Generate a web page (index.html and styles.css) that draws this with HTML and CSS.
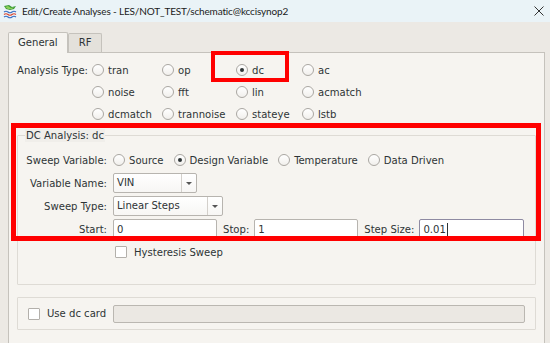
FILE: index.html
```html
<!DOCTYPE html>
<html lang="en">
<head>
  <meta charset="UTF-8" />
  <title>Edit/Create Analyses</title>
  <link rel="stylesheet" href="styles.css">
</head>
<body>
  <div class="window">
    <div class="titlebar">
      <svg class="app-icon" width="15" height="15" viewBox="0 0 15 15">
        <path d="M1 2 L6 1 L9 3 L13 2 L11 5 L7 6 L3 5 Z" fill="#3d9b3a"/>
        <path d="M2 3 L5 2 L8 4 L11 3 L9 5 L5 5 Z" fill="#8cd05a"/>
        <path d="M1 8 Q3 6.5 5 8 T9 8 T13 8" stroke="#3a6fc4" stroke-width="1.2" fill="none"/>
        <path d="M1 10.5 Q3 9 5 10.5 T9 10.5 T13 10.5" stroke="#d9452f" stroke-width="1.2" fill="none"/>
        <path d="M1 13 Q3 11.5 5 13 T9 13 T13 13" stroke="#3a6fc4" stroke-width="1.2" fill="none"/>
      </svg>
      <span class="title">Edit/Create Analyses - LES/NOT_TEST/schematic@kccisynop2</span>
      <svg class="close" width="10" height="10" viewBox="0 0 10 10">
        <path d="M0.5 0.5 L9.5 9.5 M9.5 0.5 L0.5 9.5" stroke="#333" stroke-width="1"/>
      </svg>
    </div>

    <div class="client">
      <div class="tabs">
        <div class="tab active">General</div>
        <div class="tab">RF</div>
      </div>

      <div class="panel">
        <div class="atype">
          <span class="lbl">Analysis Type:</span>
          <label class="radio"><i class="circle"></i>tran</label>
          <label class="radio"><i class="circle"></i>op</label>
          <label class="radio"><i class="circle on"></i>dc</label>
          <label class="radio"><i class="circle"></i>ac</label>

          <span></span>
          <label class="radio"><i class="circle"></i>noise</label>
          <label class="radio"><i class="circle"></i>fft</label>
          <label class="radio"><i class="circle"></i>lin</label>
          <label class="radio"><i class="circle"></i>acmatch</label>

          <span></span>
          <label class="radio"><i class="circle"></i>dcmatch</label>
          <label class="radio"><i class="circle"></i>trannoise</label>
          <label class="radio"><i class="circle"></i>stateye</label>
          <label class="radio"><i class="circle"></i>lstb</label>
        </div>

        <fieldset class="group">
          <legend>DC Analysis: dc</legend>
          <div class="form">
            <span class="lbl">Sweep Variable:</span>
            <div class="line radios">
              <label class="radio"><i class="circle"></i>Source</label>
              <label class="radio"><i class="circle on"></i>Design Variable</label>
              <label class="radio"><i class="circle"></i>Temperature</label>
              <label class="radio"><i class="circle"></i>Data Driven</label>
            </div>

            <span class="lbl">Variable Name:</span>
            <div class="line">
              <div class="combo combo-var"><span class="val">VIN</span><span class="drop"></span></div>
            </div>

            <span class="lbl">Sweep Type:</span>
            <div class="line">
              <div class="combo combo-type"><span class="val">Linear Steps</span><span class="drop"></span></div>
            </div>

            <span class="lbl">Start:</span>
            <div class="line fields">
              <div class="entry">0</div>
              <span class="flbl">Stop:</span>
              <div class="entry">1</div>
              <span class="flbl">Step Size:</span>
              <div class="entry focus">0.01<i class="caret"></i></div>
            </div>

            <span></span>
            <div class="line">
              <label class="check"><i class="box"></i>Hysteresis Sweep</label>
            </div>
          </div>
        </fieldset>

        <div class="group card">
          <label class="check"><i class="box"></i>Use dc card</label>
          <div class="entry disabled"></div>
        </div>
      </div>
    </div>

    <div class="mark mark-dc"></div>
    <div class="mark mark-group"></div>
  </div>
</body>
</html>
```

FILE: styles.css
```css
body {
  margin: 0;
  background: #ece9e4;
  font-family: "DejaVu Sans Condensed", "DejaVu Sans", sans-serif;
  font-size: 11.2px;
  color: #2e3436;
}

.window {
  position: relative;
  width: 550px;
  height: 343px;
  overflow: hidden;
}

.titlebar {
  height: 22px;
  background: #eaf3f7;
  display: flex;
  align-items: center;
  padding: 0 0 0 3px;
}

.app-icon {
  margin-right: 4px;
}

.title {
  font-family: Lato, sans-serif;
  font-size: 10px;
  letter-spacing: -0.15px;
  color: #1b1b1b;
}

.close {
  margin-left: auto;
  margin-right: 6px;
}

.client {
  padding-top: 10px;
}

.tabs {
  display: flex;
  align-items: flex-end;
  padding-left: 8px;
  height: 20px;
}

.tab {
  height: 18px;
  line-height: 18px;
  padding: 0 10px;
  border: 1px solid #c5c2bc;
  border-bottom: none;
  border-radius: 2px 2px 0 0;
  background: #e4e1db;
  color: #2e3436;
}

.tab.active {
  height: 20px;
  line-height: 20px;
  padding: 0 9px;
  background: #f6f4f0;
  margin-bottom: -1px;
  position: relative;
  z-index: 1;
}

.panel {
  margin: 0 5px 0 8px;
  border: 1px solid #c5c2bc;
  background: #f6f4f0;
  height: 300px;
}

.lbl {
  white-space: nowrap;
}

.atype {
  display: grid;
  grid-template-columns: 75px 70px 74px 66px 1fr;
  grid-auto-rows: 22px;
  align-items: center;
  padding: 6px 0 0 8px;
}

.radio {
  display: flex;
  align-items: center;
  gap: 4px;
  white-space: nowrap;
}

.circle {
  width: 10px;
  height: 10px;
  border: 1px solid #aaa7a2;
  border-radius: 50%;
  background: linear-gradient(#ffffff, #f1efec);
  display: flex;
  align-items: center;
  justify-content: center;
  flex: none;
}

.circle.on::after {
  content: "";
  width: 4px;
  height: 4px;
  border-radius: 50%;
  background: #2e3436;
}

.group {
  margin: 0 8px;
  border: 1px solid #dedbd5;
  border-radius: 1px;
}

fieldset.group {
  margin-top: 4px;
  padding: 0 0 21px;
  min-width: 0;
}

legend {
  margin-left: 7px;
  padding: 0 1px;
  background: #f0eeea;
  line-height: 13px;
}

.form {
  display: grid;
  grid-template-columns: 89px 1fr;
  grid-auto-rows: 22px;
  row-gap: 1px;
  column-gap: 6px;
  align-items: center;
  padding-top: 7px;
}

.form > .lbl {
  text-align: right;
}

.line {
  display: flex;
  align-items: center;
}

.radios {
  gap: 10px;
}

.combo {
  height: 18px;
  border: 1px solid #b7b4af;
  border-radius: 2px;
  background: linear-gradient(#ffffff, #f7f6f4);
  display: flex;
  align-items: stretch;
}

.combo .val {
  flex: 1;
  line-height: 18px;
  padding-left: 3px;
}

.combo .drop {
  width: 14px;
  border-left: 1px solid #d3d0cb;
  display: flex;
  align-items: center;
  justify-content: center;
}

.combo .drop::after {
  content: "";
  border-left: 3px solid transparent;
  border-right: 3px solid transparent;
  border-top: 3px solid #555;
}

.combo-var {
  width: 82px;
}

.combo-type {
  width: 108px;
}

.fields .entry {
  width: 104px;
}

.fields .entry.focus {
  width: 105px;
}

.flbl {
  margin: 0 5px 0 6px;
}

.entry {
  border: 1px solid #b7b4af;
  border-radius: 2px;
  background: #ffffff;
  padding-left: 3px;
  box-sizing: border-box;
  height: 20px;
  display: flex;
  align-items: center;
}

.entry.focus {
  border-color: #8e8aa2;
}

.caret {
  width: 1px;
  height: 13px;
  background: #2e3436;
  margin-left: 1px;
}

.check {
  display: flex;
  align-items: center;
  gap: 7px;
  white-space: nowrap;
}

.box {
  width: 10px;
  height: 10px;
  border: 1px solid #b3b0ab;
  border-radius: 1px;
  background: #ffffff;
  flex: none;
}

.form .check {
  margin-left: 2px;
}

.card {
  margin-top: 12px;
  height: 31px;
  display: flex;
  align-items: center;
  padding-left: 10px;
}

.entry.disabled {
  margin-left: 7px;
  width: 412px;
  height: 18px;
  background: #ebe8e3;
  border-color: #bab7b1;
}

.mark {
  position: absolute;
  border: 4px solid #ff0000;
  box-sizing: border-box;
}

.mark-dc {
  left: 211px;
  top: 51px;
  width: 78px;
  height: 31px;
}

.mark-group {
  left: 11px;
  top: 123px;
  width: 530px;
  height: 118px;
  border-width: 5px;
}
```
